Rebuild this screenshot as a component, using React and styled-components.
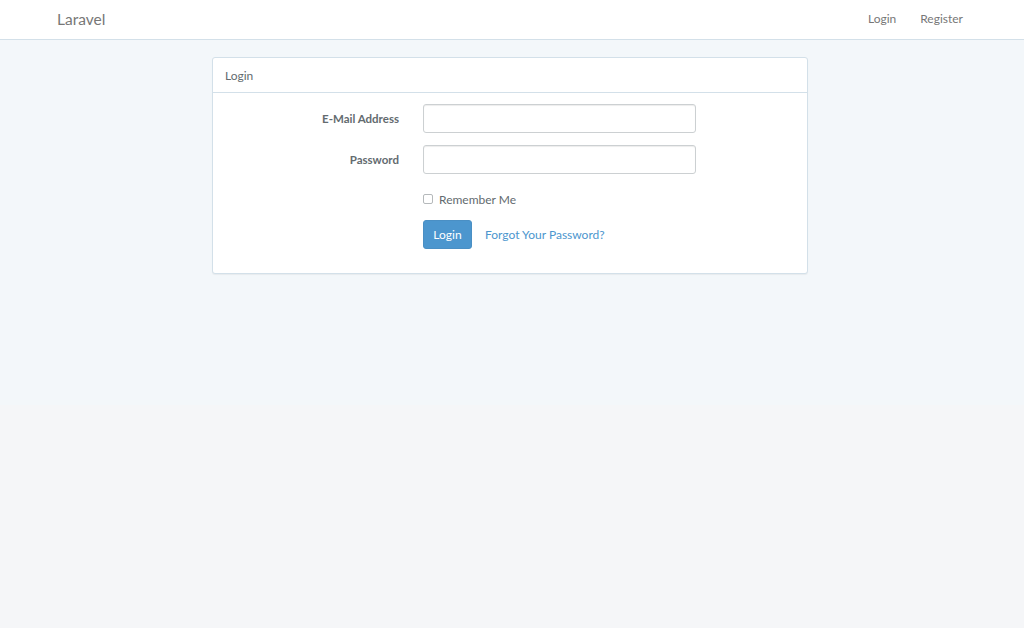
import React from "react";
import styled, { createGlobalStyle } from "styled-components";

const GlobalStyle = createGlobalStyle`
  html {
    background: #f5f6f8;
  }
  body {
    margin: 0;
    font-family: "Lato", "Open Sans", sans-serif;
    color: #636b6f;
  }
`;

function App() {
  return (
    <>
      <GlobalStyle />
      <StPage>
        <StNavbar>
          <StBrand href="#">Laravel</StBrand>
          <StNavLinks>
            <StNavLink href="#">Login</StNavLink>
            <StNavLink href="#">Register</StNavLink>
          </StNavLinks>
        </StNavbar>

        <StPanel>
          <StPanelHeading>Login</StPanelHeading>
          <StPanelBody>
            <StFormRow>
              <StLabel htmlFor="email">E-Mail Address</StLabel>
              <StInput id="email" type="email" />
            </StFormRow>
            <StFormRow>
              <StLabel htmlFor="password">Password</StLabel>
              <StInput id="password" type="password" />
            </StFormRow>
            <StFormRow>
              <span />
              <StCheckLabel>
                <StCheckbox />
                Remember Me
              </StCheckLabel>
            </StFormRow>
            <StFormRow>
              <span />
              <StActions>
                <StButton type="button">Login</StButton>
                <StLink href="#">Forgot Your Password?</StLink>
              </StActions>
            </StFormRow>
          </StPanelBody>
        </StPanel>
      </StPage>
    </>
  );
}

export default App;

const StPage = styled.div`
  min-height: 405px;
  background: #f3f7fa;
`;

const StNavbar = styled.nav`
  height: 39px;
  background: #fff;
  border-bottom: 1px solid #d3e0e9;
  display: flex;
  align-items: center;
  justify-content: space-between;
  padding: 0 61px 0 57px;
`;

const StBrand = styled.a`
  font-size: 15.5px;
  color: #777;
  text-decoration: none;
  margin-top: -2px;
`;

const StNavLinks = styled.div`
  display: flex;
  gap: 24px;
  margin-top: -2px;
`;

const StNavLink = styled.a`
  font-size: 12px;
  color: #777;
  text-decoration: none;
`;

const StPanel = styled.div`
  width: 594px;
  margin: 17px auto 0;
  transform: translateX(-2px);
  background: #fff;
  border: 1px solid #d3e0e9;
  border-radius: 3px;
  box-shadow: 0 1px 1px rgba(0, 0, 0, 0.05);
`;

const StPanelHeading = styled.div`
  height: 34px;
  display: flex;
  align-items: center;
  padding: 0 12px;
  font-size: 12px;
  color: #636b6f;
  border-bottom: 1px solid #d3e0e9;
`;

const StPanelBody = styled.div`
  padding: 11px 0 24px;
  display: flex;
  flex-direction: column;
  gap: 12px;
`;

const StFormRow = styled.div`
  display: grid;
  grid-template-columns: 186px 273px;
  column-gap: 24px;
  align-items: center;
`;

const StLabel = styled.label`
  text-align: right;
  font-weight: 700;
  font-size: 11.5px;
`;

const StInput = styled.input`
  box-sizing: border-box;
  height: 29px;
  width: 100%;
  border: 1px solid #ccd0d2;
  border-radius: 3px;
  box-shadow: inset 0 1px 1px rgba(0, 0, 0, 0.075);
  padding: 0 10px;
  font: inherit;
`;

const StCheckLabel = styled.label`
  display: flex;
  align-items: center;
  gap: 6px;
  font-size: 12px;
  height: 26px;
`;

const StCheckbox = styled.input.attrs({ type: "checkbox" })`
  width: 10px;
  height: 10px;
  margin: 0;
  appearance: none;
  border: 1px solid #b5b9bb;
  border-radius: 2px;
  background: #fff;
`;

const StActions = styled.div`
  display: flex;
  align-items: center;
  gap: 13px;
  margin-top: -4px;
`;

const StButton = styled.button`
  height: 29px;
  width: 49px;
  border: 1px solid #4a8fc4;
  border-radius: 3px;
  background: #4c96ce;
  color: #fff;
  font: inherit;
  font-size: 12px;
  padding: 0;
`;

const StLink = styled.a`
  font-size: 12px;
  color: #4c96ce;
  text-decoration: none;
`;
